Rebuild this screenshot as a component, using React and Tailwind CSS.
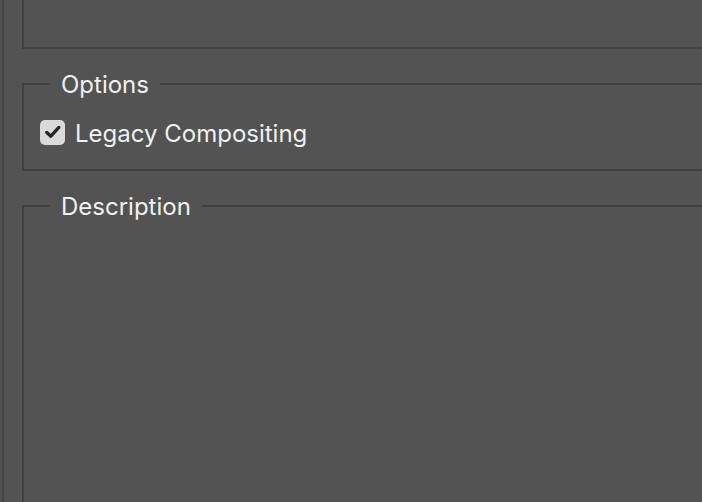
export default function App() {
  return (
    <div className="h-screen w-full overflow-hidden bg-[#535353] font-['Inter','Liberation_Sans',sans-serif] text-[#f0f0f0]">
      <div className="ml-[2px] h-full border-l-2 border-[#454545] pl-[18px]">
        <div className="w-[720px]">
          {/* top panel, cut off by the window */}
          <div className="h-[49px] border-b-2 border-l-2 border-[#404040]" />

          <fieldset className="mt-[19px] border-2 border-[#404040] pb-[24px] pl-[16px]">
            <legend className="ml-[10px] px-[11px] pt-[2px] text-[24px] leading-[30px]">Options</legend>
            <label className="mt-[19px] flex h-[26px] items-center gap-[10px]">
              <span className="flex h-[25px] w-[25px] items-center justify-center rounded-[5px] bg-[#dadada]">
                <svg viewBox="0 0 24 24" className="h-[20px] w-[20px]">
                  <path d="M4.5 12.5 L9.5 17 L19 6.5" fill="none" stroke="#262626" strokeWidth="4" strokeLinecap="round" strokeLinejoin="round" />
                </svg>
              </span>
              <span className="pt-[4px] text-[24px] leading-[26px]">Legacy Compositing</span>
            </label>
          </fieldset>

          <fieldset className="mt-[19px] h-[400px] border-2 border-[#404040] pl-[16px]">
            <legend className="ml-[10px] px-[11px] pt-[2px] text-[24px] leading-[30px]">Description</legend>
          </fieldset>
        </div>
      </div>
    </div>
  );
}
